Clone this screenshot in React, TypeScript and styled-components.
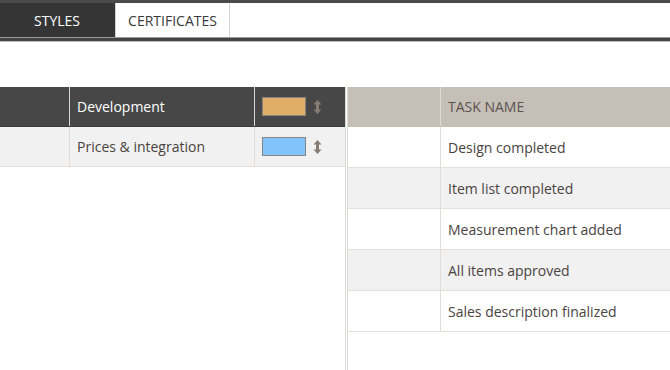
import React from 'react';
import styled, { createGlobalStyle } from 'styled-components';

const GlobalStyle = createGlobalStyle`
    html, body {
        margin: 0;
        padding: 0;
        background: white;
        font-family: "Open Sans", "Liberation Sans", sans-serif;
    }
`;

const Page = styled.div`
    width: 670px;
    height: 370px;
    display: flex;
    flex-direction: column;
    overflow: hidden;
`;

const TopStrip = styled.div`
    height: 3px;
    background: #4b4b4b;
`;

const TabBar = styled.div`
    height: 34px;
    display: flex;
    background: white;
`;

const Tab = styled.div<{ $active?: boolean }>`
    width: 115px;
    display: flex;
    align-items: center;
    justify-content: center;
    box-sizing: border-box;
    font-size: 14px;
    color: ${(p) => (p.$active ? '#ffffff' : '#3a3a3a')};
    background: ${(p) => (p.$active ? '#353535' : '#ffffff')};
    border-right: 1px solid ${(p) => (p.$active ? '#353535' : '#d6d2cf')};
    border-left: ${(p) => (p.$active ? 'none' : '1px solid #d6d2cf')};
`;

const TabRule = styled.div`
    height: 3px;
    background: #444;
    border-top: 1px solid #9a9a9a;
    border-bottom: 1px solid #bdbdbd;
`;

const Gap = styled.div`
    height: 45px;
`;

const Panels = styled.div`
    flex: 1;
    display: flex;
`;

const LeftPanel = styled.div`
    width: 345px;
    border-right: 1px solid #dedbd8;
`;

const RightPanel = styled.div`
    flex: 1;
    margin-left: 1px;
    border-left: 1px solid #dedbd8;
`;

type Tone = 'dark' | 'light' | 'white' | 'head';

const Row = styled.div<{ $tone: Tone; $tall?: boolean }>`
    height: ${(p) => (p.$tall ? '41px' : '40px')};
    display: grid;
    box-sizing: border-box;
    border-bottom: 1px solid
        ${(p) => (p.$tone === 'dark' ? '#3a3a3a' : p.$tone === 'head' ? '#c6bfb8' : '#e2dfdc')};
    background: ${(p) =>
        p.$tone === 'dark'
            ? '#474747'
            : p.$tone === 'light'
              ? '#f1f1f1'
              : p.$tone === 'head'
                ? '#c6bfb8'
                : '#ffffff'};
    color: ${(p) => (p.$tone === 'dark' ? '#ffffff' : '#4a4340')};
`;

const LeftRow = styled(Row)`
    grid-template-columns: 69px 185px 1fr;
`;

const RightRow = styled(Row)`
    grid-template-columns: 92px 1fr;
`;

const Cell = styled.div<{ $dark?: boolean }>`
    display: flex;
    align-items: center;
    gap: 7px;
    padding: 0 7px;
    font-size: 14px;
    border-left: 1px solid ${(p) => (p.$dark ? '#d8d8d8' : '#e0dcd9')};

    &:first-child {
        border-left: none;
    }
`;

const HeadCell = styled(Cell)`
    color: #5a534f;
    border-left-color: #ddd8d3;
`;

const Swatch = styled.span<{ $color: string }>`
    width: 42px;
    height: 17px;
    background: ${(p) => p.$color};
    border: 1px solid #8a8480;
`;

const SortIcon = () => (
    <svg width="9" height="16" viewBox="0 0 9 16" aria-hidden="true">
        <path d="M4.5 1 L8.5 5.5 H6 V10.5 H8.5 L4.5 15 L0.5 10.5 H3 V5.5 H0.5 Z" fill="#877c75" />
    </svg>
);

const styles = [
    { name: 'Development', color: '#e1ae67', tone: 'dark' as const },
    { name: 'Prices & integration', color: '#80c4fb', tone: 'light' as const },
];

const tasks = [
    'Design completed',
    'Item list completed',
    'Measurement chart added',
    'All items approved',
    'Sales description finalized',
];

export default function App() {
    return (
        <Page>
            <GlobalStyle />
            <TopStrip />
            <TabBar>
                <Tab $active>STYLES</Tab>
                <Tab>CERTIFICATES</Tab>
            </TabBar>
            <TabRule />
            <Gap />
            <Panels>
                <LeftPanel>
                    {styles.map((s) => (
                        <LeftRow key={s.name} $tone={s.tone}>
                            <Cell $dark={s.tone === 'dark'} />
                            <Cell $dark={s.tone === 'dark'}>{s.name}</Cell>
                            <Cell $dark={s.tone === 'dark'}>
                                <Swatch $color={s.color} />
                                <SortIcon />
                            </Cell>
                        </LeftRow>
                    ))}
                </LeftPanel>
                <RightPanel>
                    <RightRow $tone="head">
                        <HeadCell />
                        <HeadCell>TASK NAME</HeadCell>
                    </RightRow>
                    {tasks.map((t, i) => (
                        <RightRow key={t} $tall $tone={i % 2 === 0 ? 'white' : 'light'}>
                            <Cell />
                            <Cell>{t}</Cell>
                        </RightRow>
                    ))}
                </RightPanel>
            </Panels>
        </Page>
    );
}
